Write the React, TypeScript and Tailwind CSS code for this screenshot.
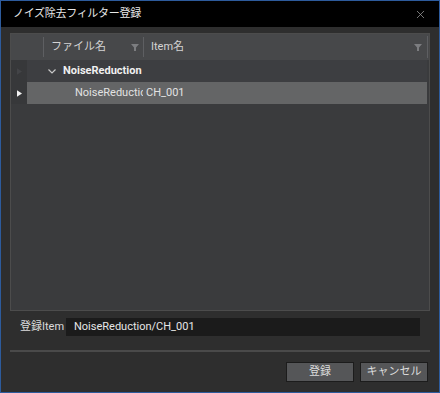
import { X } from "lucide-react";

const font = { fontFamily: 'Roboto, "Noto Sans CJK JP", sans-serif' };

function Funnel({ className = "" }: { className?: string }) {
  return (
    <svg viewBox="0 0 8 8" className={"h-[8px] w-[8px] " + className}>
      <path d="M0 1h8L5 4.5V8H3V4.5z" fill="#7c7d80" />
    </svg>
  );
}

function RowArrow({ color }: { color: string }) {
  return (
    <svg viewBox="0 0 6 8" className="h-[7px] w-[5px]">
      <path d="M0 0l6 4-6 4z" fill={color} />
    </svg>
  );
}

export default function App() {
  return (
    <div
      className="flex h-[393px] w-[440px] flex-col border border-[#2d5b9c] bg-[#2e2e2e] text-[#e6e6e6]"
      style={font}
    >
      <div className="flex h-[26px] shrink-0 items-center justify-between bg-black pl-[12px] pr-[12px]">
        <span className="text-[11px] tracking-[-0.3px] text-[#e8e8e8]">ノイズ除去フィルター登録</span>
        <X className="h-[13px] w-[13px] text-[#9a9a9a]" strokeWidth={1.4} />
      </div>

      <div className="flex flex-1 flex-col px-[9px] pt-[6px]">
        <div className="flex h-[278px] flex-col border border-[#4c4c4c] bg-[#3a3b3d]">
          {/* header */}
          <div className="flex h-[26px] shrink-0 bg-[#47484a] text-[11px] text-[#d4d4d4]">
            <div className="w-[32px] shrink-0" />
            <div className="my-[3px] w-px bg-[#5e5f62]" />
            <div className="flex w-[99px] shrink-0 items-center justify-between pl-[7px] pr-[4px]">
              <span>ファイル名</span>
              <Funnel />
            </div>
            <div className="my-[3px] w-px bg-[#5e5f62]" />
            <div className="flex flex-1 items-center justify-between pl-[7px] pr-[5px]">
              <span>Item名</span>
              <Funnel />
            </div>
            <div className="my-[2px] w-px bg-[#5e5f62]" />
            <div className="w-[1px]" />
          </div>

          {/* group row */}
          <div className="flex h-[22px] shrink-0 text-[11px]">
            <div className="flex w-[16px] shrink-0 items-center justify-center bg-[#37383a]">
              <RowArrow color="#434447" />
            </div>
            <div className="mr-[2px] flex flex-1 items-center bg-[#3d3e41] pl-[21px]">
              <svg viewBox="0 0 8 5" className="h-[5px] w-[8px]">
                <path d="M0.5 0.5L4 4L7.5 0.5" fill="none" stroke="#c8c8c8" strokeWidth="1.2" />
              </svg>
              <span className="ml-[7px] font-bold text-[#f0f0f0]">NoiseReduction</span>
            </div>
          </div>

          {/* selected row */}
          <div className="flex h-[22px] shrink-0 text-[11px] text-[#e2e2e2]">
            <div className="flex w-[16px] shrink-0 items-center justify-center bg-[#37383a]">
              <RowArrow color="#f2f2f2" />
            </div>
            <div className="mr-[2px] flex flex-1 items-center bg-[#646566]">
              <div className="w-[116px] shrink-0 overflow-hidden whitespace-nowrap pl-[48px]">NoiseReduction</div>
              <span className="pl-[3px]">CH_001</span>
            </div>
          </div>

          <div className="flex-1" />
        </div>

        <div className="mt-[7px] flex h-[18px] items-center text-[11px]">
          <span className="w-[56px] shrink-0 whitespace-nowrap pl-[10px] text-[#dcdcdc]">登録Item</span>
          <div className="flex h-[18px] w-[354px] items-center bg-[#1b1b1b] pl-[8px] text-[#e6e6e6]">
            NoiseReduction/CH_001
          </div>
        </div>

        <div className="mt-[14px] h-[2px] bg-[#4a4a4a]" />

        <div className="mt-[10px] flex justify-end gap-[6px] pr-[2px]">
          <button className="flex h-[20px] w-[68px] items-center justify-center border border-[#1c1c1c] bg-[#555658] text-[11px] text-[#dcdcdc]">
            登録
          </button>
          <button className="flex h-[20px] w-[68px] items-center justify-center border border-[#1c1c1c] bg-[#555658] text-[11px] text-[#dcdcdc]">
            キャンセル
          </button>
        </div>
      </div>
    </div>
  );
}
